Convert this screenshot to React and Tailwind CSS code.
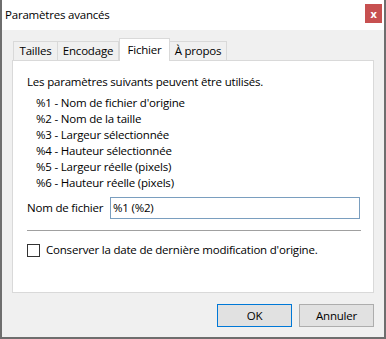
export default function App() {
  const items = [
    "%1 - Nom de fichier d'origine",
    "%2 - Nom de la taille",
    "%3 - Largeur sélectionnée",
    "%4 - Hauteur sélectionnée",
    "%5 - Largeur réelle (pixels)",
    "%6 - Hauteur réelle (pixels)",
  ];
  return (
    <div className="w-[386px] h-[339px] flex flex-col border-x-2 border-b-2 border-[#6e6e6e] bg-[#f0f0f0] font-['Open_Sans',sans-serif] text-[11.5px] tracking-[-0.2px] leading-[16px] text-black">
      <div className="h-[30px] shrink-0 bg-white flex items-start justify-between">
        <div className="pl-[3px] pt-[7px]">Paramètres avancés</div>
        <div className="mt-[4px] mr-[2px] w-[17px] h-[19px] bg-[#c75050] text-white flex items-center justify-center text-[11px] font-bold leading-none">
          x
        </div>
      </div>
      <div className="flex-1 flex flex-col px-[10px] pt-[8px]">
        <div className="flex items-end h-[22px] pl-[1px]">
          <div className="w-[45px] h-[19px] border border-b-0 border-[#d9d9d9] flex items-center justify-center">
            Tailles
          </div>
          <div className="w-[61px] h-[19px] border border-l-0 border-b-0 border-[#d9d9d9] flex items-center justify-center">
            Encodage
          </div>
          <div className="relative z-10 w-[51px] h-[23px] -mb-[1px] bg-white border border-b-0 border-[#d9d9d9] flex items-center justify-center pb-[1px]">
            Fichier
          </div>
          <div className="w-[57px] h-[19px] border border-l-0 border-b-0 border-[#d9d9d9] flex items-center justify-center">
            À propos
          </div>
        </div>
        <div className="w-[362px] h-[233px] border border-[#d9d9d9] bg-white pl-[14px] pt-[13px] flex flex-col">
          <div>Les paramètres suivants peuvent être utilisés.</div>
          <div className="mt-[5px] ml-[9px] flex flex-col">
            {items.map((t) => (
              <div key={t} className="h-[16px]">{t}</div>
            ))}
          </div>
          <div className="mt-[6px] flex items-center h-[22px]">
            <div className="w-[83px]">Nom de fichier</div>
            <div className="w-[250px] h-[22px] border border-[#7a9ebf] pl-[2px] flex items-center">
              %1 (%2)
            </div>
          </div>
          <div className="mt-[11px] w-[334px] h-px bg-[#a0a0a0]" />
          <div className="mt-[11px] flex items-center h-[16px]">
            <div className="w-[13px] h-[13px] border border-[#333333] bg-white" />
            <div className="ml-[6px]">Conserver la date de dernière modification d'origine.</div>
          </div>
        </div>
        <div className="w-[362px] mt-[11px] flex justify-end gap-[7px]">
          <div className="w-[75px] h-[23px] border border-[#0078d7] bg-[#e1e1e1] flex items-center justify-center">
            OK
          </div>
          <div className="w-[75px] h-[23px] border border-[#adadad] bg-[#e1e1e1] flex items-center justify-center">
            Annuler
          </div>
        </div>
      </div>
    </div>
  );
}
